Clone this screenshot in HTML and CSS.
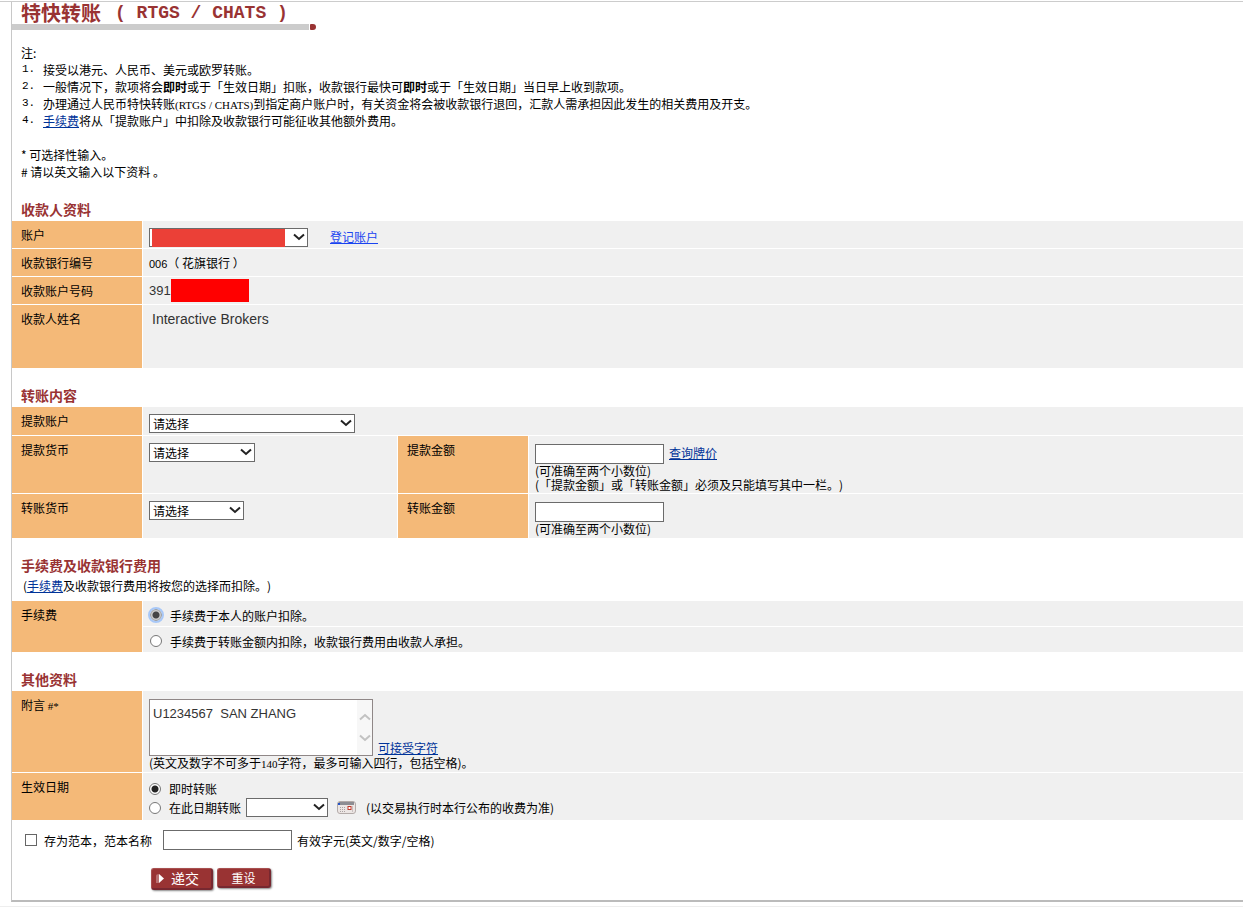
FILE: index.html
```html
<!DOCTYPE html>
<html lang="zh-CN">

<head>
  <meta charset="UTF-8">
  <meta name="viewport" content="width=device-width, initial-scale=1.0">
  <title>特快转账</title>
  <link rel="stylesheet" href="styles.css">
</head>

<body>
  <form class="panel">
    <!-- 标题 -->
    <h1 class="title"><span>特快转账</span><span class="title-en">( RTGS / CHATS )</span></h1>
    <div class="title-bar"><span class="bar"></span><span class="dot"></span></div>

    <!-- 注意事项 -->
    <div class="notes">
      <p>注:</p>
      <ol>
        <li><span class="no">1.</span><span>接受以港元、人民币、美元或欧罗转账。</span></li>
        <li><span class="no">2.</span><span>一般情况下，款项将会<b>即时</b>或于「生效日期」扣账，收款银行最快可<b>即时</b>或于「生效日期」当日早上收到款项。</span></li>
        <li><span class="no">3.</span><span>办理通过人民币特快转账<span class="en">(RTGS / CHATS)</span>到指定商户账户时，有关资金将会被收款银行退回，汇款人需承担因此发生的相关费用及开支。</span></li>
        <li><span class="no">4.</span><span><a href="#">手续费</a>将从「提款账户」中扣除及收款银行可能征收其他额外费用。</span></li>
      </ol>
      <p class="marks">* 可选择性输入。</p>
      <p># 请以英文输入以下资料 。</p>
    </div>

    <!-- 收款人资料 -->
    <h2>收款人资料</h2>
    <div class="rows">
      <div class="row">
        <label class="name" for="payee">账户</label>
        <div class="value line">
          <span class="select payee">
            <select id="payee"><option></option></select>
            <span class="mask"></span>
            <svg viewBox="0 0 12 8"><path d="M1 1.5 L6 6 L11 1.5"/></svg>
          </span>
          <a class="register" href="#">登记账户</a>
        </div>
      </div>
      <div class="row">
        <div class="name">收款银行编号</div>
        <div class="value text"><span class="code">006</span>（ 花旗银行 ）</div>
      </div>
      <div class="row">
        <div class="name">收款账户号码</div>
        <div class="value account"><span class="latin">391</span><span class="block"></span></div>
      </div>
      <div class="row payee-name">
        <div class="name">收款人姓名</div>
        <div class="value text"><span class="broker">Interactive Brokers</span></div>
      </div>
    </div>

    <!-- 转账内容 -->
    <h2>转账内容</h2>
    <div class="rows">
      <div class="row from">
        <label class="name" for="from">提款账户</label>
        <div class="value line">
          <span class="select wide">
            <select id="from"><option>请选择</option></select>
            <svg viewBox="0 0 12 8"><path d="M1 1.5 L6 6 L11 1.5"/></svg>
          </span>
        </div>
      </div>
      <div class="row debit">
        <label class="name" for="debit-cur">提款货币</label>
        <div class="value half">
          <span class="select medium">
            <select id="debit-cur"><option>请选择</option></select>
            <svg viewBox="0 0 12 8"><path d="M1 1.5 L6 6 L11 1.5"/></svg>
          </span>
        </div>
        <label class="name" for="debit-amt">提款金额</label>
        <div class="value amount">
          <div class="line"><input type="text" id="debit-amt"><a href="#">查询牌价</a></div>
          <p>(可准确至两个小数位)</p>
          <p>(「提款金额」或「转账金额」必须及只能填写其中一栏。)</p>
        </div>
      </div>
      <div class="row credit">
        <label class="name" for="credit-cur">转账货币</label>
        <div class="value half">
          <span class="select small">
            <select id="credit-cur"><option>请选择</option></select>
            <svg viewBox="0 0 12 8"><path d="M1 1.5 L6 6 L11 1.5"/></svg>
          </span>
        </div>
        <label class="name" for="credit-amt">转账金额</label>
        <div class="value amount">
          <div class="line"><input type="text" id="credit-amt"></div>
          <p>(可准确至两个小数位)</p>
        </div>
      </div>
    </div>

    <!-- 手续费 -->
    <h2>手续费及收款银行费用</h2>
    <p class="sub">(<a href="#">手续费</a>及收款银行费用将按您的选择而扣除。)</p>
    <div class="rows">
      <div class="row">
        <div class="name">手续费</div>
        <div class="choices">
          <label class="choice"><input type="radio" name="fee" class="focused" checked>手续费于本人的账户扣除。</label>
          <label class="choice"><input type="radio" name="fee">手续费于转账金额内扣除，收款银行费用由收款人承担。</label>
        </div>
      </div>
    </div>

    <!-- 其他资料 -->
    <h2>其他资料</h2>
    <div class="rows">
      <div class="row remark">
        <label class="name" for="remark">附言 <span class="en">#*</span></label>
        <div class="value">
          <div class="remark-box">
            <div class="area">
              <textarea id="remark">U1234567  SAN ZHANG</textarea>
              <div class="scroll">
                <svg viewBox="0 0 12 8"><path d="M1 6.5 L6 2 L11 6.5"/></svg>
                <svg viewBox="0 0 12 8"><path d="M1 1.5 L6 6 L11 1.5"/></svg>
              </div>
            </div>
            <a href="#">可接受字符</a>
          </div>
          <p>(英文及数字不可多于<span class="en">140</span>字符，最多可输入四行，包括空格)。</p>
        </div>
      </div>
      <div class="row effective">
        <div class="name">生效日期</div>
        <div class="value">
          <div class="line date"><label><input type="radio" name="date" checked>即时转账</label></div>
          <div class="line date">
            <label><input type="radio" name="date">在此日期转账</label>
            <span class="select day">
              <select aria-label="日期"><option></option></select>
              <svg viewBox="0 0 12 8"><path d="M1 1.5 L6 6 L11 1.5"/></svg>
            </span>
            <svg class="calendar" viewBox="0 0 19 13">
              <rect x="0.5" y="0.5" width="18" height="12" rx="2.5" fill="#ece6e4" stroke="#b3aba9"/>
              <path d="M2 1 H17 V4 H1 Z" fill="#8d8d92"/>
              <rect x="1" y="2" width="2" height="2" fill="#2554c7"/>
              <path d="M3 6.5 H9 M3 8.5 H9 M3 10.5 H9" stroke="#aaa3a3" stroke-dasharray="1 1"/>
              <rect x="11" y="5.5" width="3" height="3" fill="#fff" stroke="#c0392b"/>
              <path d="M15.5 5 V11" stroke="#c9c1c0"/>
            </svg>
            <span>(以交易执行时本行公布的收费为准)</span>
          </div>
        </div>
      </div>
    </div>

    <!-- 存为范本 -->
    <div class="template">
      <label><input type="checkbox">存为范本，范本名称</label>
      <input type="text" aria-label="范本名称">
      <span>有效字元(英文/数字/空格)</span>
    </div>

    <div class="buttons">
      <button type="button" class="submit">
        <svg viewBox="0 0 9 11"><path d="M0 3 Q0 1 3 1 V10 H0 Z" fill="#b87070"/><path d="M3 1 L8 5.5 L3 10 Z" fill="#fff"/></svg>递交</button>
      <button type="button" class="reset">重设</button>
    </div>
  </form>
</body>

</html>
```
FILE: styles.css
```css
* {
  box-sizing: border-box;
}

body {
  margin: 0;
  padding-top: 1px;
  background: #fff;
  color: #000;
  font: 12px/17px "Noto Sans CJK SC", sans-serif;
  text-spacing-trim: space-all;
  border-bottom: 1px solid #eee;
}

body::before {
  content: "";
  display: block;
  height: 1px;
  background: #ccc;
}

p,
ol {
  margin: 0;
  padding: 0;
  list-style: none;
}

a {
  color: #003399;
  text-decoration: underline;
}

.panel {
  margin: 0 0 4px 11px;
  border-left: 1px solid #c8c8c8;
  border-bottom: 2px solid #bbb;
}

/* 标题 */
.title {
  display: flex;
  gap: 14px;
  margin: 0;
  padding-left: 9px;
  height: 22px;
  color: #993333;
  font-size: 20px;
  font-weight: bold;
  line-height: 22px;
}

.title-en {
  font-family: "Liberation Mono", monospace;
  font-size: 18px;
}

.title-bar {
  display: flex;
  gap: 1px;
}

.title-bar .bar {
  width: 297px;
  height: 6px;
  background: #ccc;
}

.title-bar .dot {
  width: 6px;
  height: 6px;
  border-radius: 1px 3px 3px 1px;
  background: #993333;
}

/* 注意事项 */
.notes {
  margin: 14px 0 17px;
  padding-left: 9px;
}

.notes li {
  display: flex;
}

.notes .no {
  flex: none;
  width: 22px;
  padding-left: 1px;
  font-family: "Liberation Mono", monospace;
  font-size: 11px;
}

.notes .marks {
  margin-top: 17px;
}

.en {
  font-family: "Liberation Serif", serif;
  font-size: 11px;
  line-height: 11px;
}

h2 {
  margin: 15px 0 0;
  padding-left: 9px;
  color: #993333;
  font-size: 14px;
  line-height: 24px;
}

.sub {
  padding: 0 0 7px 11px;
}

/* 表格 */
.rows {
  display: flex;
  flex-direction: column;
  gap: 1px;
}

.row {
  display: flex;
  gap: 1px;
  min-height: 27px;
}

.name {
  flex: none;
  width: 130px;
  padding: 5px 0 0 9px;
  background: #f4b978;
}

.value {
  flex: 1;
  padding: 7px 0 0 6px;
  background: #f0f0f0;
}

.value.text {
  padding-top: 5px;
}

.value.half {
  flex: none;
  width: 254px;
}

.value.amount {
  padding-top: 8px;
}

.value p {
  line-height: 14px;
}

.payee-name {
  min-height: 63px;
}

.from {
  min-height: 28px;
}

.debit {
  min-height: 57px;
}

.credit {
  min-height: 44px;
}

.remark {
  min-height: 81px;
}

.effective {
  min-height: 47px;
}

.line {
  display: flex;
  align-items: flex-start;
}

.line a {
  margin-left: 5px;
}

.line .register {
  margin-left: 22px;
  color: #1a44f0;
}

/* 下拉菜单 */
.select {
  display: block;
  position: relative;
  height: 19px;
}

.select select {
  display: block;
  width: 100%;
  height: 19px;
  padding: 0 3px;
  border: 1px solid #6b6b6b;
  border-radius: 0;
  background: #fff;
  color: #000;
  font: inherit;
  line-height: 17px;
  appearance: none;
}

.select svg {
  position: absolute;
  right: 3px;
  top: 5px;
  width: 12px;
  height: 8px;
  fill: none;
  stroke: #222;
  stroke-width: 2;
  pointer-events: none;
}

.payee {
  width: 159px;
}

.wide {
  width: 206px;
}

.medium {
  width: 106px;
}

.small {
  width: 95px;
}

.day {
  width: 82px;
}

.mask {
  position: absolute;
  left: 3px;
  top: 1px;
  width: 133px;
  height: 18px;
  background: #eb4037;
}

.code {
  font-family: "Liberation Sans", sans-serif;
  font-size: 11px;
  line-height: 11px;
}

.value.account {
  display: flex;
  align-items: center;
  padding-top: 0;
}

.latin {
  width: 22px;
  color: #333;
  font-family: "Liberation Sans", sans-serif;
  font-size: 13px;
}

.block {
  width: 78px;
  height: 23px;
  background: #f00;
}

.broker {
  padding-left: 3px;
  color: #333;
  font-family: "Liberation Sans", sans-serif;
  font-size: 14px;
}

input[type="text"] {
  width: 129px;
  height: 20px;
  border: 1px solid #6b6b6b;
  border-radius: 0;
  background: #fff;
  font: inherit;
}

input[type="radio"] {
  flex: none;
  width: 12px;
  height: 12px;
  margin: 0 8px 0 0;
  border: 1px solid #777;
  border-radius: 50%;
  background: #fff;
  appearance: none;
}

input[type="radio"]:checked {
  background: radial-gradient(#222 0 3px, #fff 4px);
}

input[type="radio"].focused {
  border-color: #999;
  background: radial-gradient(#444 0 3px, #ccc 4px);
  outline: 2px solid #a8c8f8;
  outline-offset: 0;
}

/* 手续费选项 */
.choices {
  flex: 1;
  display: flex;
  flex-direction: column;
  gap: 1px;
}

.choice {
  display: flex;
  align-items: center;
  height: 25px;
  padding: 3px 0 0 7px;
  background: #f0f0f0;
}

/* 附言 */
.remark .value {
  padding-top: 8px;
}

.remark-box {
  display: flex;
  align-items: flex-end;
  gap: 5px;
}

.area {
  display: flex;
  width: 224px;
  height: 57px;
  border: 1px solid #8f8787;
  background: #fff;
}

.area textarea {
  flex: 1;
  min-width: 0;
  padding: 5px 3px;
  border: 0;
  outline: 0;
  resize: none;
  overflow: hidden;
  background: #fff;
  color: #333;
  font: 13px/17px "Liberation Sans", sans-serif;
}

.scroll {
  display: flex;
  flex-direction: column;
  justify-content: space-between;
  align-items: center;
  width: 15px;
  padding: 13px 0;
  background: #f7f7f7;
}

.scroll svg {
  width: 12px;
  height: 8px;
  fill: none;
  stroke: #c2c2c2;
  stroke-width: 2;
}

/* 生效日期 */
.effective .value {
  padding-top: 6px;
}

.effective .date {
  align-items: center;
  height: 19px;
}

.effective label {
  display: flex;
  align-items: center;
}

.effective .select {
  margin: 0 9px 0 5px;
}

.calendar {
  width: 19px;
  height: 13px;
  margin-right: 10px;
}

.template {
  display: flex;
  align-items: center;
  padding: 10px 0 0 13px;
}

.template label {
  display: flex;
  align-items: center;
  margin-right: 11px;
}

.template input[type="checkbox"] {
  width: 12px;
  height: 12px;
  margin: 0 7px 0 0;
  border: 1px solid #666;
  background: #fff;
  appearance: none;
}

.template input[type="text"] {
  margin-right: 5px;
}

/* 按钮 */
.buttons {
  display: flex;
  align-items: flex-start;
  gap: 4px;
  padding: 18px 0 10px 139px;
}

.buttons button {
  display: flex;
  align-items: center;
  justify-content: center;
  padding: 0;
  border: 1px solid #a85050;
  border-right: 2px solid #772830;
  border-bottom: 2px solid #772830;
  border-radius: 3px;
  background: #993333;
  box-shadow: 1px 1px 2px #888;
  color: #fff;
  font: 12px/17px "Noto Sans CJK SC", sans-serif;
}

.buttons .submit {
  justify-content: flex-start;
  width: 62px;
  height: 22px;
  padding-left: 4px;
  gap: 6px;
  font-size: 14px;
}

.buttons .submit svg {
  width: 9px;
  height: 11px;
}

.buttons .reset {
  width: 54px;
  height: 20px;
}
```
